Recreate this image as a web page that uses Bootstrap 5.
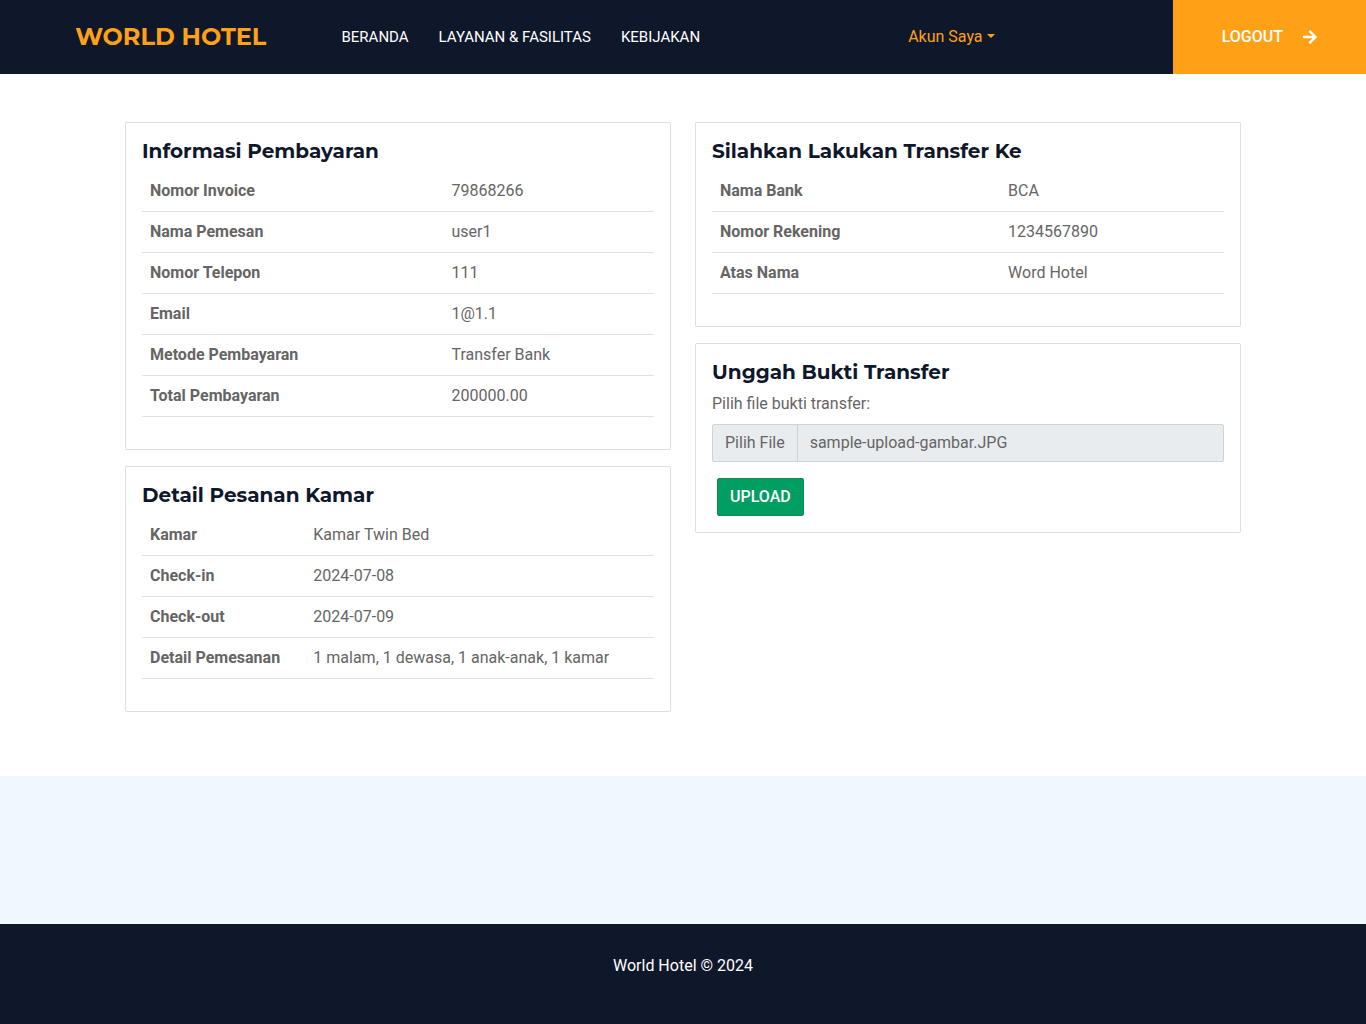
<!DOCTYPE html>
<html lang="id">
<head>
<meta charset="utf-8">
<meta name="viewport" content="width=device-width, initial-scale=1">
<title>World Hotel</title>
<link href="https://cdn.jsdelivr.net/npm/bootstrap@5.3.0/dist/css/bootstrap.min.css" rel="stylesheet">
<style>
:root { --hotel-gold: #fea116; --hotel-navy: #0f172b; --hotel-pale: #f0f8ff; --hotel-green: #009e60; }
body { font-family: Roboto, "Liberation Sans", sans-serif; color: #666565; }
.bg-navy { background: var(--hotel-navy); }
.bg-pale { background: var(--hotel-pale); }
.hotel-brand { font-family: Montserrat, Inter, sans-serif; font-size: 24px; line-height: 30px; font-weight: 700; color: var(--hotel-gold); }
.navbar .hotel-nav .nav-link { color: #fff; font-size: 15px; font-weight: 400; margin-right: 30px; padding: 0; }
.hotel-account { color: var(--hotel-gold); }
.hotel-logout { background: var(--hotel-gold); color: #fff; font-weight: 500; line-height: 24px; padding: 25px 49px; border: 0; }
.hotel-logout svg { margin-left: 20px; }
.card { border-color: rgba(0, 0, 0, .125); --bs-card-border-radius: 2px; color: inherit; }
.card-title { font-family: Montserrat, Inter, sans-serif; font-size: 20px; line-height: 24px; font-weight: 700; color: var(--hotel-navy); }
.table { --bs-table-color: #666565; color: #666565; border-color: #dee2e6; }
.hotel-file .btn, .hotel-file .form-control { color: #666565; background: #e9ecef; border: 1px solid #ced4da; border-radius: 2px; opacity: 1; }
.hotel-upload { background: var(--hotel-green); border: 1px solid #198754; color: #fff; font-weight: 500; border-radius: 2px; margin-left: 5px; }
.hotel-spacer { height: 148px; }
.hotel-footer { color: #fff; padding: 30px 24px; }
</style>
<script src="https://cdn.jsdelivr.net/npm/bootstrap@5.3.0/dist/js/bootstrap.bundle.min.js" defer></script>
</head>
<body class="d-flex flex-column min-vh-100">
<header class="bg-navy">
  <div class="row gx-0 align-items-center">
    <div class="col-lg-3 text-center">
      <a href="#" class="hotel-brand text-decoration-none">WORLD HOTEL</a>
    </div>
    <div class="col-lg-9">
      <nav class="navbar navbar-expand-lg p-0 justify-content-between">
        <div class="navbar-nav hotel-nav">
          <a href="#" class="nav-link">BERANDA</a>
          <a href="#" class="nav-link">LAYANAN &amp; FASILITAS</a>
          <a href="#" class="nav-link">KEBIJAKAN</a>
        </div>
        <div class="dropdown">
          <a href="#" class="hotel-account dropdown-toggle text-decoration-none" data-bs-toggle="dropdown" role="button" aria-expanded="false">Akun Saya</a>
        </div>
        <a href="#" class="hotel-logout d-flex align-items-center text-decoration-none">LOGOUT
          <svg width="14" height="16" viewBox="0 0 448 512" fill="#fff" aria-hidden="true"><path d="M190.500 66.900l22.200-22.200c9.400-9.400 24.600-9.400 33.900 0L441 239c9.400 9.400 9.400 24.600 0 33.900L246.600 467.300c-9.400 9.400-24.600 9.400-33.900 0l-22.200-22.200c-9.500-9.500-9.300-25 .4-34.300L311.400 296H24c-13.300 0-24-10.700-24-24v-32c0-13.300 10.700-24 24-24h287.400L190.900 101.200c-9.800-9.300-10-24.800-.4-34.300z"/></svg>
        </a>
      </nav>
    </div>
  </div>
</header>

<main class="container py-5">
  <div class="row">
    <div class="col-md-6">
      <section class="card mb-3">
        <div class="card-body">
          <h5 class="card-title">Informasi Pembayaran</h5>
          <table class="table">
            <tbody>
              <tr><th scope="row">Nomor Invoice</th><td>79868266</td></tr>
              <tr><th scope="row">Nama Pemesan</th><td>user1</td></tr>
              <tr><th scope="row">Nomor Telepon</th><td>111</td></tr>
              <tr><th scope="row">Email</th><td>1@1.1</td></tr>
              <tr><th scope="row">Metode Pembayaran</th><td>Transfer Bank</td></tr>
              <tr><th scope="row">Total Pembayaran</th><td>200000.00</td></tr>
            </tbody>
          </table>
        </div>
      </section>
      <section class="card mb-3">
        <div class="card-body">
          <h5 class="card-title">Detail Pesanan Kamar</h5>
          <table class="table">
            <tbody>
              <tr><th scope="row">Kamar</th><td>Kamar Twin Bed</td></tr>
              <tr><th scope="row">Check-in</th><td>2024-07-08</td></tr>
              <tr><th scope="row">Check-out</th><td>2024-07-09</td></tr>
              <tr><th scope="row">Detail Pemesanan</th><td>1 malam, 1 dewasa, 1 anak-anak, 1 kamar</td></tr>
            </tbody>
          </table>
        </div>
      </section>
    </div>
    <div class="col-md-6">
      <section class="card mb-3">
        <div class="card-body">
          <h5 class="card-title">Silahkan Lakukan Transfer Ke</h5>
          <table class="table">
            <tbody>
              <tr><th scope="row">Nama Bank</th><td>BCA</td></tr>
              <tr><th scope="row">Nomor Rekening</th><td>1234567890</td></tr>
              <tr><th scope="row">Atas Nama</th><td>Word Hotel</td></tr>
            </tbody>
          </table>
        </div>
      </section>
      <section class="card mb-3">
        <form class="card-body">
          <h5 class="card-title">Unggah Bukti Transfer</h5>
          <label for="bukti" class="form-label d-block">Pilih file bukti transfer:</label>
          <div class="input-group hotel-file mb-3">
            <button type="button" class="btn" disabled>Pilih File</button>
            <input type="text" id="bukti" class="form-control" value="sample-upload-gambar.JPG" disabled>
          </div>
          <button type="submit" class="btn hotel-upload">UPLOAD</button>
        </form>
      </section>
    </div>
  </div>
</main>

<div class="bg-pale hotel-spacer"></div>
<footer class="bg-navy hotel-footer flex-grow-1 text-center">World Hotel © 2024</footer>
</body>
</html>
